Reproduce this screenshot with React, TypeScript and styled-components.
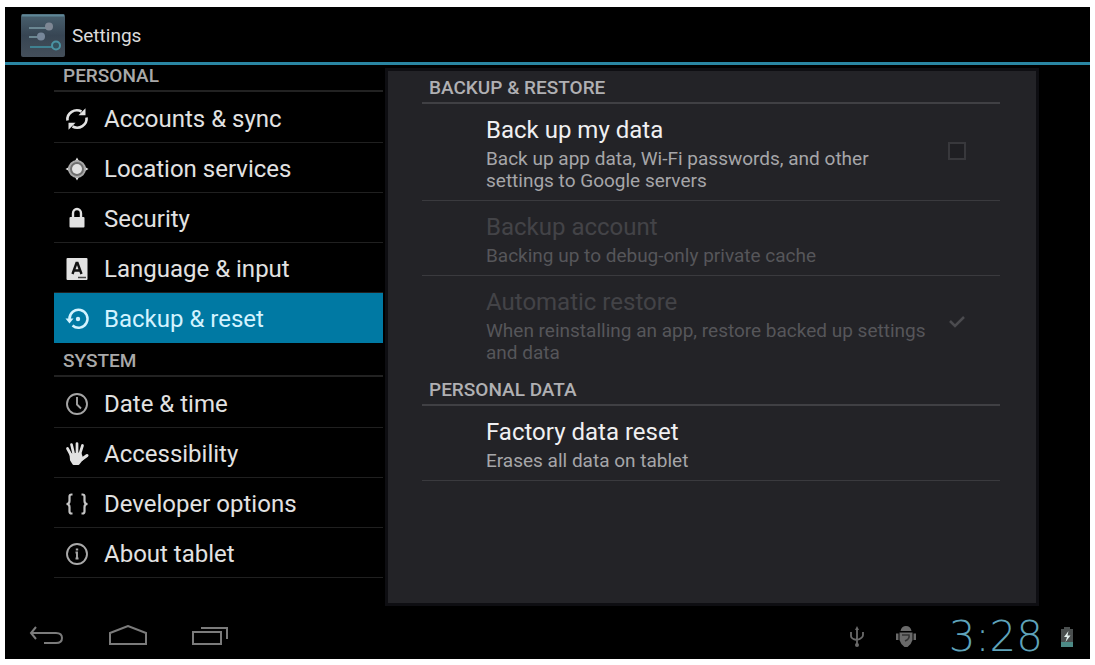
import React from "react";
import styled, { createGlobalStyle, css } from "styled-components";

const GlobalStyle = createGlobalStyle`
  *, *::before, *::after { box-sizing: border-box; }
  body { margin: 0; background: #fff; font-family: Roboto, "Noto Sans", sans-serif; }
  h1, h2, h3, p, ul { margin: 0; padding: 0; font-weight: 400; }
  ul { list-style: none; }
`;

const Page = styled.div`
  min-height: 100vh;
  padding: 7px 5px 6px;
  display: flex;
`;

const Tablet = styled.div`
  flex: 1;
  display: flex;
  flex-direction: column;
  background: #000;
  color: #dedede;
`;

const ActionBar = styled.header`
  display: flex;
  align-items: center;
  gap: 7px;
  height: 58px;
  padding: 2px 16px 0;
  border-bottom: 3px solid #2a86a3;
`;

const AppTitle = styled.h1`
  font-size: 19px;
  line-height: 24px;
  color: #dcdcdc;
`;

const Body = styled.div`
  flex: 1;
  display: grid;
  grid-template-columns: 329px minmax(0, 1fr);
  column-gap: 2px;
  padding: 0 51px 0 49px;
`;

const Sidebar = styled.nav`
  display: flex;
  flex-direction: column;
`;

const NavHeading = styled.h2<{ $first?: boolean }>`
  display: flex;
  align-items: flex-end;
  height: ${(p) => (p.$first ? 28 : 35)}px;
  padding: 0 9px 7px;
  font-size: 19px;
  font-weight: 500;
  line-height: 20px;
  color: #a9a9a9;
  box-shadow: inset 0 -1px #000, inset 0 -3px #222;
`;

const NavButton = styled.button<{ $active?: boolean }>`
  display: flex;
  align-items: center;
  gap: 14px;
  width: 100%;
  height: 50px;
  padding: 2px 9px 0 10px;
  border: 0;
  border-bottom: 1px solid #202020;
  background: none;
  color: #e2e2e2;
  font: 400 24px/30px Roboto, "Noto Sans", sans-serif;
  text-align: left;
  cursor: pointer;
  ${(p) =>
    p.$active &&
    css`
      background: #0079a3;
      border-bottom-color: #0079a3;
      color: #d3f3ff;
    `}
`;

const NavIcon = styled.svg`
  flex: none;
  width: 26px;
  height: 26px;
`;

const Panel = styled.main`
  margin-top: 3px;
  padding: 0 36px 24px 34px;
  background: #232327;
  border: 3px solid #0e0e12;
`;

const Group = styled.section``;

const GroupHeading = styled.h2`
  display: flex;
  align-items: flex-end;
  height: 33px;
  padding: 0 7px 4px;
  font-size: 19px;
  font-weight: 500;
  line-height: 20px;
  color: #b0b0b3;
  border-bottom: 2px solid #404044;
`;

const Preference = styled.div<{ $last?: boolean }>`
  display: flex;
  align-items: center;
  justify-content: space-between;
  gap: 10px;
  padding: 12px 34px 8px 64px;
  border-bottom: 1px solid ${(p) => (p.$last ? "transparent" : "#3a3a3e")};
`;

const PreferenceText = styled.div`
  display: grid;
  gap: 4px;
  max-width: 446px;
`;

const PreferenceTitle = styled.label<{ $disabled?: boolean }>`
  font-size: 24px;
  line-height: 28px;
  color: ${(p) => (p.$disabled ? "#434347" : "#f0f0f2")};
`;

const PreferenceSummary = styled.p<{ $disabled?: boolean }>`
  font-size: 19px;
  line-height: 22px;
  color: ${(p) => (p.$disabled ? "#56565a" : "#a6a6a9")};
`;

const CheckCell = styled.span`
  display: grid;
  flex: none;
  place-items: center;
  padding-bottom: 6px;
`;

const CheckInput = styled.input`
  grid-area: 1 / 1;
  appearance: none;
  width: 18px;
  height: 18px;
  margin: 0;
  border: 2px solid #38383c;
  background: #1f1f23;
  &:checked {
    border-color: transparent;
    background: none;
  }
`;

const CheckMark = styled.svg`
  grid-area: 1 / 1;
  width: 22px;
  height: 18px;
  pointer-events: none;
`;

const SystemBar = styled.footer`
  display: flex;
  align-items: center;
  justify-content: space-between;
  height: 53px;
  padding: 8px 16px 0 22px;
`;

const SystemKeys = styled.div`
  display: flex;
  align-items: center;
  gap: 44px;
`;

const KeyButton = styled.button`
  display: block;
  padding: 0;
  border: 0;
  background: none;
  color: #7b7b7b;
  cursor: pointer;
  svg { display: block; }
`;

const Status = styled.div`
  display: flex;
  align-items: center;
  color: #6a6a6a;
`;

const StatusIcon = styled.svg<{ $gap: number }>`
  flex: none;
  margin-right: ${(p) => p.$gap}px;
`;

const Clock = styled.time`
  margin-right: 17px;
  font: 200 42px/44px "DejaVu Sans Light", "DejaVu Sans", sans-serif;
  color: #5fa3ba;
`;

const AppIcon = () => (
  <svg width="44" height="43" viewBox="0 0 44 43" aria-hidden="true">
    <defs>
      <linearGradient id="tile" x1="0" y1="0" x2="0" y2="1">
        <stop offset="0" stopColor="#49616f" />
        <stop offset="0.5" stopColor="#374553" />
        <stop offset="1" stopColor="#444f5a" />
      </linearGradient>
    </defs>
    <rect x="0" y="0" width="44" height="43" rx="2" fill="url(#tile)" />
    <path d="M1 1.500H43" stroke="#5f8797" strokeWidth="2" />
    <path d="M8 14H29M8 23H20" stroke="#6b8792" strokeWidth="2" />
    <path d="M9 33H34" stroke="#3f8191" strokeWidth="2" />
    <circle cx="28" cy="12.500" r="4" fill="#7e8794" />
    <circle cx="20" cy="22.500" r="4" fill="#77879a" />
    <circle cx="35" cy="31.500" r="4" fill="#34515e" stroke="#4a93a3" strokeWidth="2" />
  </svg>
);

const icons: Record<string, React.ReactNode> = {
  sync: (
    <g fill="none" stroke="currentColor" strokeWidth="2.600">
      <path d="M3.500 14.500A9.500 9 0 0 1 17.500 5.500" />
      <path d="M22.500 11.500A9.500 9 0 0 1 8.500 20.500" />
      <path d="M14.500 9.200L21.500 9.200L21.500 2.200Z" fill="currentColor" stroke="none" />
      <path d="M11.500 16.800L4.500 16.800L4.500 23.800Z" fill="currentColor" stroke="none" />
    </g>
  ),
  location: (
    <g>
      <path d="M13 1.500L15 5H11ZM13 24.500L15 21H11ZM1.500 13L5 11V15ZM24.500 13L21 11V15Z" fill="currentColor" />
      <circle cx="13" cy="13" r="8" fill="#707070" stroke="#a9a9a9" strokeWidth="2" />
      <circle cx="13" cy="13" r="5" fill="currentColor" />
    </g>
  ),
  lock: (
    <g>
      <path d="M9 12V7.500A4 4.500 0 0 1 17 7.500V12" fill="none" stroke="currentColor" strokeWidth="2.400" />
      <rect x="5.500" y="11" width="15" height="10.500" rx="1" fill="currentColor" />
    </g>
  ),
  language: (
    <g>
      <rect x="2.500" y="2" width="21" height="22" rx="1" fill="currentColor" />
      <path d="M8.500 18L12.500 7H13.500L17.500 18M10 14.500H16" fill="none" stroke="#111" strokeWidth="2.400" />
      <path d="M14 21.500H22" stroke="#444" strokeWidth="1.500" />
    </g>
  ),
  backup: (
    <g>
      <path d="M5.500 13A9 9 0 1 1 8.500 19.500" fill="none" stroke="currentColor" strokeWidth="2.500" />
      <path d="M1.500 12.500H9.500L5.500 17.500Z" fill="currentColor" />
      <circle cx="14" cy="13" r="2.200" fill="currentColor" />
    </g>
  ),
  clock: (
    <g fill="none" stroke="#a5a5a5" strokeWidth="1.900">
      <circle cx="13" cy="13" r="10" />
      <path d="M13 6V13.500L17 17.500" />
    </g>
  ),
  hand: (
    <g fill="none" stroke="currentColor" strokeLinecap="round" strokeLinejoin="round">
      <path d="M7 14L3.500 7.500M9.500 12L7.500 3.500M13 12L13 2.500M16 12.500L18.500 4.500" strokeWidth="2.700" />
      <path d="M17.500 18.500L23 14.500" strokeWidth="3" />
      <path d="M6.500 13.500L16.500 12.500L18.500 18L14.500 23H9.500L7 19Z" fill="currentColor" strokeWidth="2" />
    </g>
  ),
  braces: (
    <g fill="none" stroke="#c4c4c4" strokeWidth="2.200">
      <path d="M8.500 3.500H7.500Q5.500 3.500 5.500 5.500V10Q5.500 13 2.500 13Q5.500 13 5.500 16V20.500Q5.500 22.500 7.500 22.500H8.500" />
      <path d="M17.500 3.500H18.500Q20.500 3.500 20.500 5.500V10Q20.500 13 23.500 13Q20.500 13 20.500 16V20.500Q20.500 22.500 18.500 22.500H17.500" />
    </g>
  ),
  info: (
    <g fill="none" stroke="#a9a9a9" strokeWidth="1.900">
      <circle cx="13" cy="13" r="10" />
      <path d="M11.500 11.500H13V17.500M11.500 17.500H14.500" />
      <path d="M13 7.500V9.500" strokeWidth="2.400" />
    </g>
  ),
};

type Entry = { label: string; icon: string; active?: boolean };

const personal: Entry[] = [
  { label: "Accounts & sync", icon: "sync" },
  { label: "Location services", icon: "location" },
  { label: "Security", icon: "lock" },
  { label: "Language & input", icon: "language" },
  { label: "Backup & reset", icon: "backup", active: true },
];

const system: Entry[] = [
  { label: "Date & time", icon: "clock" },
  { label: "Accessibility", icon: "hand" },
  { label: "Developer options", icon: "braces" },
  { label: "About tablet", icon: "info" },
];

const NavList = ({ entries }: { entries: Entry[] }) => (
  <ul>
    {entries.map((e) => (
      <li key={e.label}>
        <NavButton type="button" $active={e.active} aria-current={e.active ? "page" : undefined}>
          <NavIcon viewBox="0 0 26 26" aria-hidden="true">{icons[e.icon]}</NavIcon>
          {e.label}
        </NavButton>
      </li>
    ))}
  </ul>
);

type PrefProps = {
  id: string;
  title: string;
  summary: string;
  disabled?: boolean;
  last?: boolean;
  check?: boolean;
};

const Pref = ({ id, title, summary, disabled, last, check }: PrefProps) => (
  <Preference $last={last}>
    <PreferenceText>
      <PreferenceTitle as={check === undefined ? "h3" : "label"} htmlFor={check === undefined ? undefined : id} $disabled={disabled}>
        {title}
      </PreferenceTitle>
      <PreferenceSummary $disabled={disabled}>{summary}</PreferenceSummary>
    </PreferenceText>
    {check !== undefined && (
      <CheckCell>
        <CheckInput id={id} type="checkbox" defaultChecked={check} disabled={disabled} />
        {check && (
          <CheckMark viewBox="0 0 22 18" aria-hidden="true">
            <path d="M6 7L11 12L20 3" fill="none" stroke="#4b4b4f" strokeWidth="2.500" />
          </CheckMark>
        )}
      </CheckCell>
    )}
  </Preference>
);

export default function App() {
  return (
    <Page>
      <GlobalStyle />
      <Tablet>
        <ActionBar>
          <AppIcon />
          <AppTitle>Settings</AppTitle>
        </ActionBar>
        <Body>
          <Sidebar aria-label="Settings">
            <NavHeading $first>PERSONAL</NavHeading>
            <NavList entries={personal} />
            <NavHeading>SYSTEM</NavHeading>
            <NavList entries={system} />
          </Sidebar>
          <Panel>
            <Group>
              <GroupHeading>BACKUP &amp; RESTORE</GroupHeading>
              <Pref id="backup" title="Back up my data" summary="Back up app data, Wi-Fi passwords, and other settings to Google servers" check={false} />
              <Pref id="account" title="Backup account" summary="Backing up to debug-only private cache" disabled />
              <Pref id="restore" title="Automatic restore" summary="When reinstalling an app, restore backed up settings and data" disabled last check />
            </Group>
            <Group>
              <GroupHeading>PERSONAL DATA</GroupHeading>
              <Pref id="reset" title="Factory data reset" summary="Erases all data on tablet" />
            </Group>
          </Panel>
        </Body>
        <SystemBar>
          <SystemKeys>
            <KeyButton type="button" aria-label="Back">
              <svg width="38" height="24" viewBox="0 0 38 24" fill="none" stroke="currentColor" strokeWidth="2">
                <path d="M9 2L4 8L9 14M4 8H29Q35 8 35 13Q35 18 29 18H17" />
              </svg>
            </KeyButton>
            <KeyButton type="button" aria-label="Home">
              <svg width="38" height="24" viewBox="0 0 38 24" fill="none" stroke="currentColor" strokeWidth="2">
                <path d="M1 19V8L19 1L37 8V19Z" />
              </svg>
            </KeyButton>
            <KeyButton type="button" aria-label="Recent apps">
              <svg width="38" height="24" viewBox="0 0 38 24" fill="none" stroke="currentColor" strokeWidth="2">
                <path d="M2 7H30V19H2ZM10 3H36V14" />
              </svg>
            </KeyButton>
          </SystemKeys>
          <Status>
            <StatusIcon $gap={30} width="16" height="22" viewBox="0 0 16 22" fill="none" stroke="currentColor" strokeWidth="1.800" aria-hidden="true">
              <path d="M8 2V19M2 6V10Q2 13 8 14Q14 12 14 9V6" />
              <path d="M8 0L10 4H6Z" fill="currentColor" stroke="none" />
              <circle cx="8" cy="19" r="2" fill="currentColor" stroke="none" />
            </StatusIcon>
            <StatusIcon $gap={32} width="22" height="22" viewBox="0 0 22 22" fill="currentColor" aria-hidden="true">
              <path d="M5.500 5Q6.500 0 11 0Q15.500 0 16.500 5Z" />
              <path d="M4.500 6.500H17.500V14Q16.500 18 12.500 21H9.500Q5.500 18 4.500 14Z" />
              <path d="M1 7.500H3.500V14H1ZM18.500 7.500H21V14H18.500Z" />
              <path d="M7 9H14Q15 13 10 15" fill="none" stroke="#333" strokeWidth="1.600" />
            </StatusIcon>
            <Clock dateTime="03:28">3:28</Clock>
            <svg width="14" height="20" viewBox="0 0 14 20" aria-hidden="true">
              <path d="M4 0H10V2H13V20H1V2H4Z" fill="#4a4f4f" />
              <path d="M1 15H13V20H1Z" fill="#4d8a86" />
              <path d="M8.500 4L4 10H7L5.500 15L10.500 8.500H7.500Z" fill="#e5f2f0" />
            </svg>
          </Status>
        </SystemBar>
      </Tablet>
    </Page>
  );
}
